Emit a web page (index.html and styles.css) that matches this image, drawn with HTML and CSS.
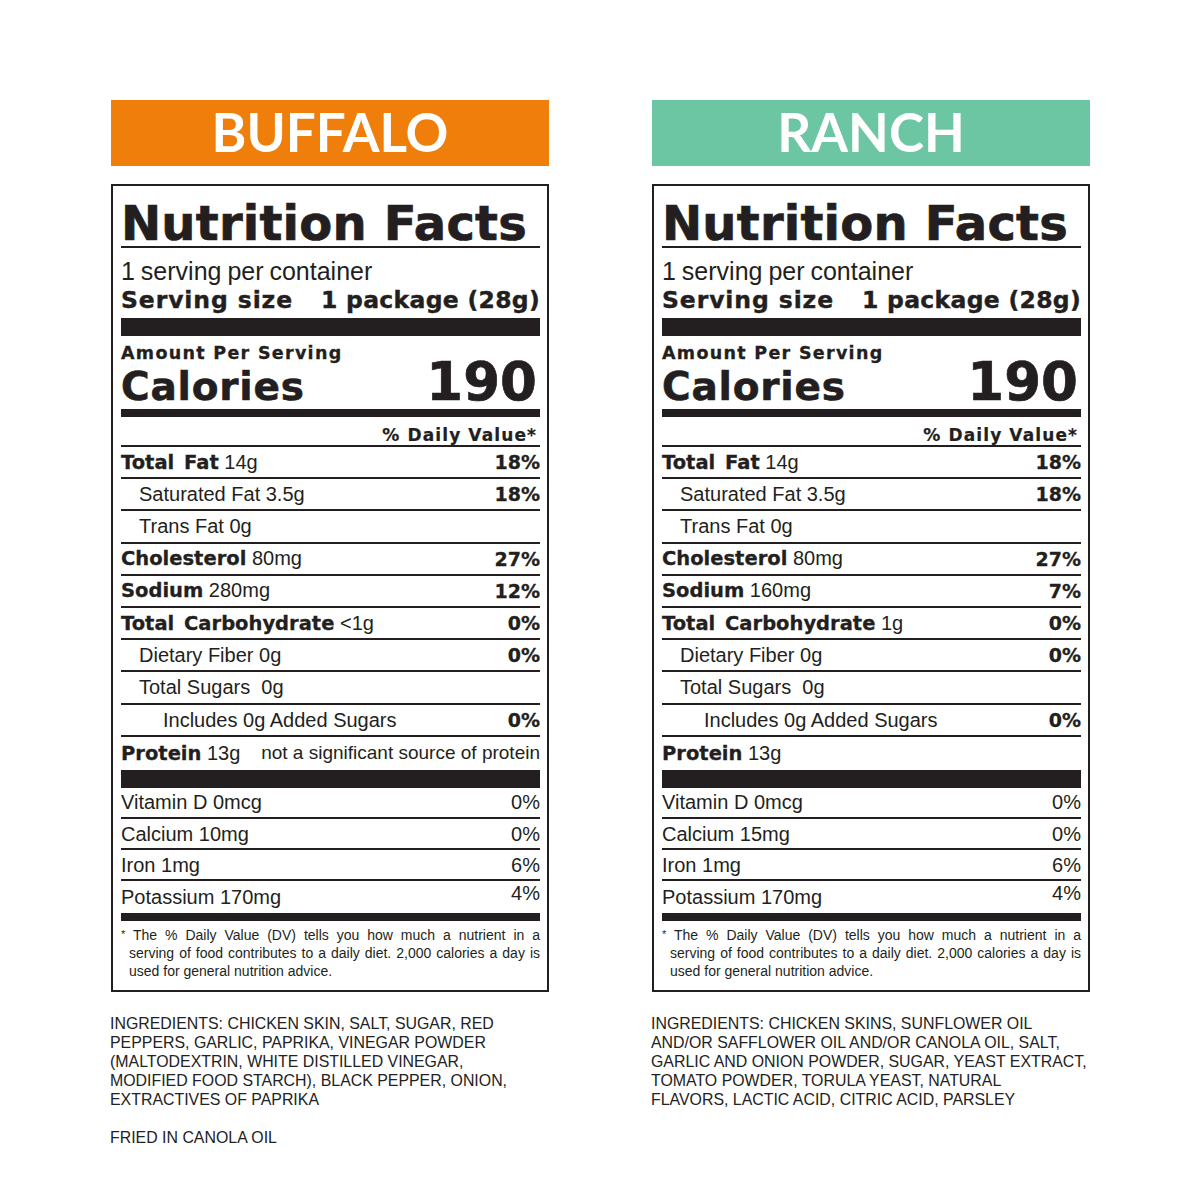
FILE: index.html
```html
<!DOCTYPE html>
<html lang="en">
<head>
<meta charset="utf-8">
<title>Nutrition Facts</title>
<link rel="stylesheet" href="styles.css">
</head>
<body>
<div class="page">
  <section class="col">
    <div class="banner buffalo">BUFFALO</div>
    <div class="label">
      <div class="nf-title">Nutrition Facts</div>
      <div class="servings">1 serving per container</div>
      <div class="serving-size"><span>Serving size</span><span class="pkg">1 package (28g)</span></div>
      <div class="bar-lg"></div>
      <div class="amount">Amount Per Serving</div>
      <div class="calories"><span class="cal-label">Calories</span><span class="cal-value">190</span></div>
      <div class="bar-md"></div>
      <div class="dv-head">% Daily Value*</div>
      <div class="row"><span><b>Total Fat</b> 14g</span><span class="pct">18%</span></div>
      <div class="row sub"><span>Saturated Fat 3.5g</span><span class="pct">18%</span></div>
      <div class="row sub"><span>Trans Fat 0g</span></div>
      <div class="row"><span><b>Cholesterol</b> 80mg</span><span class="pct">27%</span></div>
      <div class="row"><span><b>Sodium</b> 280mg</span><span class="pct">12%</span></div>
      <div class="row"><span><b>Total Carbohydrate</b> &lt;1g</span><span class="pct">0%</span></div>
      <div class="row sub"><span>Dietary Fiber 0g</span><span class="pct">0%</span></div>
      <div class="row sub"><span>Total Sugars&nbsp; 0g</span></div>
      <div class="row sub2"><span>Includes 0g Added Sugars</span><span class="pct">0%</span></div>
      <div class="row protein"><span><b>Protein</b> 13g</span><span class="note">not a significant source of protein</span></div>
      <div class="bar-lg"></div>
      <div class="vrow"><span>Vitamin D 0mcg</span><span>0%</span></div>
      <div class="vrow"><span>Calcium 10mg</span><span>0%</span></div>
      <div class="vrow"><span>Iron 1mg</span><span>6%</span></div>
      <div class="vrow last"><span>Potassium 170mg</span><span class="up">4%</span></div>
      <div class="bar-md"></div>
      <p class="footnote">
        <span class="fn-line first"><span class="star">*</span> The % Daily Value (DV) tells you how much a nutrient in a</span>
        <span class="fn-line">serving of food contributes to a daily diet. 2,000 calories a day is</span>
        <span class="fn-line end">used for general nutrition advice.</span>
      </p>
    </div>
    <div class="ingredients">
      <p>INGREDIENTS: CHICKEN SKIN, SALT, SUGAR, RED<br>PEPPERS, GARLIC, PAPRIKA, VINEGAR POWDER<br>(MALTODEXTRIN, WHITE DISTILLED VINEGAR,<br>MODIFIED FOOD STARCH), BLACK PEPPER, ONION,<br>EXTRACTIVES OF PAPRIKA</p>
      <p>FRIED IN CANOLA OIL</p>
    </div>
  </section>

  <section class="col">
    <div class="banner ranch">RANCH</div>
    <div class="label">
      <div class="nf-title">Nutrition Facts</div>
      <div class="servings">1 serving per container</div>
      <div class="serving-size"><span>Serving size</span><span class="pkg">1 package (28g)</span></div>
      <div class="bar-lg"></div>
      <div class="amount">Amount Per Serving</div>
      <div class="calories"><span class="cal-label">Calories</span><span class="cal-value">190</span></div>
      <div class="bar-md"></div>
      <div class="dv-head">% Daily Value*</div>
      <div class="row"><span><b>Total Fat</b> 14g</span><span class="pct">18%</span></div>
      <div class="row sub"><span>Saturated Fat 3.5g</span><span class="pct">18%</span></div>
      <div class="row sub"><span>Trans Fat 0g</span></div>
      <div class="row"><span><b>Cholesterol</b> 80mg</span><span class="pct">27%</span></div>
      <div class="row"><span><b>Sodium</b> 160mg</span><span class="pct">7%</span></div>
      <div class="row"><span><b>Total Carbohydrate</b> 1g</span><span class="pct">0%</span></div>
      <div class="row sub"><span>Dietary Fiber 0g</span><span class="pct">0%</span></div>
      <div class="row sub"><span>Total Sugars&nbsp; 0g</span></div>
      <div class="row sub2"><span>Includes 0g Added Sugars</span><span class="pct">0%</span></div>
      <div class="row protein"><span><b>Protein</b> 13g</span></div>
      <div class="bar-lg"></div>
      <div class="vrow"><span>Vitamin D 0mcg</span><span>0%</span></div>
      <div class="vrow"><span>Calcium 15mg</span><span>0%</span></div>
      <div class="vrow"><span>Iron 1mg</span><span>6%</span></div>
      <div class="vrow last"><span>Potassium 170mg</span><span class="up">4%</span></div>
      <div class="bar-md"></div>
      <p class="footnote">
        <span class="fn-line first"><span class="star">*</span> The % Daily Value (DV) tells you how much a nutrient in a</span>
        <span class="fn-line">serving of food contributes to a daily diet. 2,000 calories a day is</span>
        <span class="fn-line end">used for general nutrition advice.</span>
      </p>
    </div>
    <div class="ingredients">
      <p>INGREDIENTS: CHICKEN SKINS, SUNFLOWER OIL<br>AND/OR SAFFLOWER OIL AND/OR CANOLA OIL, SALT,<br>GARLIC AND ONION POWDER, SUGAR, YEAST EXTRACT,<br>TOMATO POWDER, TORULA YEAST, NATURAL<br>FLAVORS, LACTIC ACID, CITRIC ACID, PARSLEY</p>
    </div>
  </section>
</div>
</body>
</html>
```

FILE: styles.css
```css
* { box-sizing: border-box; }

body {
  margin: 0;
  background: #ffffff;
  color: #231f20;
  font-family: "Liberation Sans", Arial, sans-serif;
}

.page {
  display: flex;
  gap: 103px;
  padding: 100px 0 0 111px;
}

.col {
  width: 438px;
}

.banner {
  height: 66px;
  margin: 0 0 18px;
  text-align: center;
  color: #ffffff;
  font-family: Lato, "DejaVu Sans", sans-serif;
  font-weight: 700;
  font-size: 53px;
  line-height: 64px;
}

.buffalo { background: #ef7f0a; }
.ranch { background: #6cc5a3; }

.label {
  border: 2px solid #231f20;
  padding: 0 7px 0 8px;
}

.nf-title {
  height: 62px;
  padding-top: 13px;
  border-bottom: 2px solid #231f20;
  font-family: "DejaVu Sans", sans-serif;
  font-weight: 700;
  font-size: 48px;
  line-height: 48px;
  white-space: nowrap;
  letter-spacing: 0.2px;
  -webkit-text-stroke: 0.7px #231f20;
}

.servings {
  padding-top: 8px;
  font-size: 25px;
  line-height: 30px;
  white-space: nowrap;
  word-spacing: -1px;
}

.serving-size {
  display: flex;
  justify-content: space-between;
  margin: 1px 0 5px;
  font-family: "DejaVu Sans", sans-serif;
  font-weight: 700;
  font-size: 23.5px;
  line-height: 26px;
  letter-spacing: 0.9px;
  white-space: nowrap;
  -webkit-text-stroke: 0.4px #231f20;
}

.serving-size .pkg {
  letter-spacing: 0.3px;
}

.bar-lg {
  height: 18px;
  background: #231f20;
}

.bar-md {
  height: 8px;
  background: #231f20;
}

.amount {
  padding-top: 7px;
  font-family: "DejaVu Sans", sans-serif;
  font-weight: 700;
  font-size: 17.5px;
  line-height: 20px;
  letter-spacing: 1.3px;
  -webkit-text-stroke: 0.3px #231f20;
}

.calories {
  display: flex;
  justify-content: space-between;
  align-items: baseline;
  height: 46px;
  font-family: "DejaVu Sans", sans-serif;
  font-weight: 700;
}

.cal-label {
  font-size: 39px;
  line-height: 38px;
  letter-spacing: 0.8px;
  -webkit-text-stroke: 0.6px #231f20;
}

.cal-value {
  font-size: 53px;
  line-height: 38px;
  padding-right: 3px;
  -webkit-text-stroke: 0.7px #231f20;
}

.dv-head {
  height: 30px;
  padding: 8px 3px 0 0;
  border-bottom: 2px solid #231f20;
  text-align: right;
  font-family: "DejaVu Sans", sans-serif;
  font-weight: 700;
  font-size: 17px;
  line-height: 20px;
  letter-spacing: 1.1px;
  -webkit-text-stroke: 0.2px #231f20;
}

.row {
  display: flex;
  justify-content: space-between;
  align-items: center;
  height: 32.2px;
  border-bottom: 2px solid #231f20;
  font-size: 20px;
  line-height: 22px;
  white-space: nowrap;
}

.row b {
  font-family: "DejaVu Sans", sans-serif;
  font-weight: 700;
  font-size: 19.5px;
  word-spacing: 3px;
  -webkit-text-stroke: 0.3px #231f20;
}

.row .pct {
  font-family: "DejaVu Sans", sans-serif;
  font-weight: 700;
  font-size: 19px;
  -webkit-text-stroke: 0.3px #231f20;
}

.row.sub { padding-left: 18px; }
.row.sub2 { padding-left: 42px; }

.row.protein {
  height: 33px;
  border-bottom: none;
}

.row .note {
  font-size: 19px;
}

.vrow {
  display: flex;
  justify-content: space-between;
  align-items: center;
  height: 31.25px;
  border-bottom: 2px solid #231f20;
  font-size: 20px;
  line-height: 22px;
  white-space: nowrap;
}

.vrow.last { border-bottom: none; }

.vrow .up { margin-bottom: 8px; }

.footnote {
  margin: 0;
  padding: 4px 0 10px 8px;
  font-size: 14px;
  line-height: 18px;
}

.fn-line {
  display: block;
  text-align: justify;
  text-align-last: justify;
}

.fn-line.first { margin-left: -8px; }
.fn-line.end { text-align-last: left; }

.star {
  font-size: 11px;
  vertical-align: 2px;
}

.ingredients {
  margin: 22px 0 0 -1px;
  color: #222222;
  font-size: 15.9px;
  line-height: 19px;
  white-space: nowrap;
}

.ingredients p { margin: 0; }
.ingredients p + p { margin-top: 19px; }
```
